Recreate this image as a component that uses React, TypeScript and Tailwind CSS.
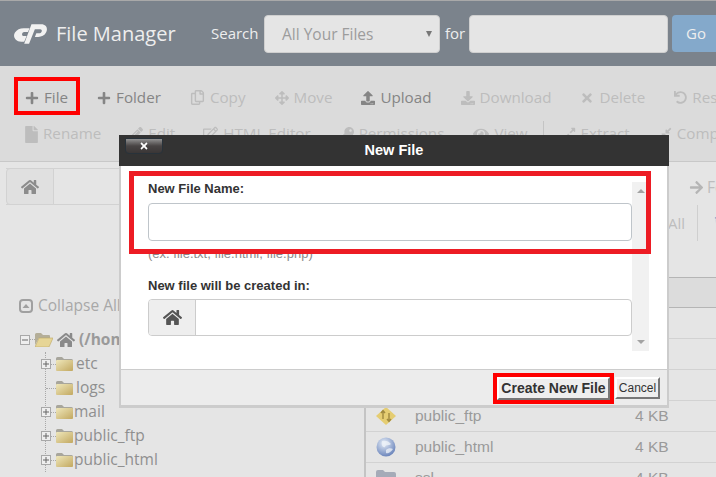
import React from 'react';
import {
  FaPlus, FaRegCopy, FaArrowsAlt, FaUpload, FaDownload, FaTimes, FaUndo, FaFile, FaPencilAlt, FaRegEdit,
  FaKey, FaEye, FaExpandAlt, FaCompressAlt, FaHome, FaArrowRight, FaTrash,
} from 'react-icons/fa';

const CpLogo = () => (
  <svg viewBox="0 0 34 22" className="w-[33px] h-[22px] shrink-0" fill="#f2f2f2">
    <path d="M10 5 H16 L14.4 9 H10.5 C8.2 9 7.4 12.8 9.6 13 H13 L10.5 19 H7.5 C1 19 -1.5 13 1 9.5 C3 6.5 6 5 10 5 Z" />
    <path d="M18 1 H28 C34 1 35 6 33 9.5 C31.5 12.5 28.5 14 25 14 H21.5 L23 10.2 H26.5 C29 10.2 29.6 6 27 6 H21.5 L15.5 21 H10.5 Z" />
  </svg>
);

const Tool = ({ icon, label, on }: { icon: React.ReactNode; label: string; on?: boolean }) => (
  <div className={`flex shrink-0 items-center gap-[5px] whitespace-nowrap ${on ? 'text-[#858585]' : 'text-[#bdbdbd]'}`}>
    {icon}
    <span>{label}</span>
  </div>
);

const TreeBox = ({ minus }: { minus?: boolean }) => (
  <svg viewBox="0 0 10 10" className="w-[10px] h-[10px] shrink-0">
    <rect x="0.5" y="0.5" width="9" height="9" fill="#eeeeee" stroke="#a8a8a8" />
    <path d={minus ? 'M2 5 H8' : 'M2 5 H8 M5 2 V8'} stroke="#666666" strokeWidth="1" fill="none" />
  </svg>
);

const TreeFolder = () => (
  <svg viewBox="0 0 17 14" className="w-[17px] h-[14px] shrink-0">
    <defs>
      <linearGradient id="fold" x1="0" y1="0" x2="1" y2="1">
        <stop offset="0" stopColor="#efe7bb" />
        <stop offset="1" stopColor="#c2a860" />
      </linearGradient>
    </defs>
    <path d="M0 1.5 Q0 0 1.5 0 H6 L8 2 H15.5 Q17 2 17 3.5 V5 H0 Z" fill="#a8a69c" />
    <rect x="0" y="3" width="17" height="11" rx="1" fill="url(#fold)" />
  </svg>
);

const OpenFolder = () => (
  <svg viewBox="0 0 18 14" className="w-[18px] h-[14px] shrink-0">
    <path d="M0 1.5 Q0 0 1.5 0 H6 L8 2 H14 Q15 2 15 3 V5 H4 L0 12 Z" fill="#b4ae98" />
    <path d="M4 5 H18 L14 14 H0 Z" fill="#e6d596" stroke="#bda766" strokeWidth="0.6" />
  </svg>
);

const TreeRow = ({ name, gap, box = true }: { name: string; gap: string; box?: boolean }) => (
  <div className="flex items-center h-[24px] -ml-[5px]">
    {box ? <TreeBox /> : <span className="w-[10px] ml-[5px] -mr-[5px] border-t border-dotted border-[#a8a8a8]" />}
    <span className="w-[5px] border-t border-dotted border-[#a8a8a8]" />
    <TreeFolder />
    <span className={`${gap} text-[#8f8f8f]`}>{name}</span>
  </div>
);

const FileRow = ({ icon, name, size }: { icon?: React.ReactNode; name?: string; size?: string }) => (
  <div className="flex items-center h-[31px] border-b border-[#d2d2d2] text-[15.5px] text-[#9a9a9a] font-['Liberation_Sans',sans-serif]">
    <div className="w-[49px] shrink-0 flex justify-center pr-[9px]">{icon}</div>
    <div className="w-[220px] shrink-0">{name}</div>
    <div className="whitespace-nowrap">{size}</div>
  </div>
);

const FtpIcon = () => (
  <svg viewBox="0 0 20 18" className="w-[20px] h-[18px]">
    <path d="M10 0 L20 9 L10 18 L0 9 Z" fill="#e5cd72" />
    <path d="M7 4 V12 M5 6 L7 3.5 L9 6 M13 14 V6 M11 12 L13 14.5 L15 12" stroke="#a08a40" strokeWidth="1.4" fill="none" />
  </svg>
);

const GlobeIcon = () => (
  <svg viewBox="0 0 20 20" className="w-[20px] h-[20px]">
    <defs>
      <radialGradient id="globe" cx="0.4" cy="0.3" r="0.8">
        <stop offset="0" stopColor="#e4ecf6" />
        <stop offset="1" stopColor="#5c78b4" />
      </radialGradient>
    </defs>
    <circle cx="10" cy="10" r="9.5" fill="url(#globe)" />
    <path d="M6 4 C9 3 13 4 15 7 C13 9 10 7 9 10 C7 11 5 8 6 4 Z M10 13 C12 11 15 11 17 12 C15 15 12 17 10 16 Z" fill="#f0f4fa" opacity="0.75" />
  </svg>
);

const SmallFolder = () => (
  <svg viewBox="0 0 20 16" className="w-[20px] h-[16px]">
    <path d="M0 2 Q0 0 2 0 H7 L9 2 H18 Q20 2 20 4 V16 H0 Z" fill="#a5abb8" />
  </svg>
);

const App: React.FC = () => {
  return (
    <div className="relative w-[716px] h-[477px] overflow-hidden bg-[#e5e5e5] font-['Open_Sans',sans-serif]">
      {/* header */}
      <div className="h-[66px] bg-[#7b838c] border-t border-[#a9a9a9] flex items-center pl-[14px] text-[#eeeeee]">
        <CpLogo />
        <span className="ml-[9px] shrink-0 text-[20px] w-[155px]">File Manager</span>
        <span className="shrink-0 text-[15px] w-[53px]">Search</span>
        <div className="shrink-0 w-[176px] h-[38px] rounded-[4px] bg-[#e5e5e5] border border-[#cfcfcf] flex items-center justify-between pl-[17px] pr-[7px] text-[15.5px] text-[#9c9c9c]">
          <span className="pt-[2px]">All Your Files</span>
          <span className="w-0 h-0 border-x-[3px] border-x-transparent border-t-[6px] border-t-[#777]" />
        </div>
        <span className="shrink-0 ml-[5px] text-[15px] w-[24px]">for</span>
        <div className="shrink-0 w-[199px] h-[38px] rounded-[4px] bg-[#e5e5e5] border border-[#cfcfcf]" />
        <div className="shrink-0 ml-[4px] w-[60px] h-[37px] rounded-[4px] bg-[#84a9cb] flex items-center pl-[14px] text-[15px]">Go</div>
      </div>

      {/* toolbar */}
      <div className="h-[96px] bg-[#dbdbdb] border-b border-[#c8c8c8] pt-[14px] text-[15.2px] leading-none">
        <div className="flex items-center h-[36px] pl-[25px] gap-[29px]">
          <Tool on label="File" icon={<FaPlus size={14} />} />
          <Tool on label="Folder" icon={<FaPlus size={14} />} />
          <Tool label="Copy" icon={<FaRegCopy size={15} />} />
          <Tool label="Move" icon={<FaArrowsAlt size={14} />} />
          <Tool on label="Upload" icon={<FaUpload size={14} />} />
          <Tool label="Download" icon={<FaDownload size={14} />} />
          <Tool label="Delete" icon={<FaTimes size={14} />} />
          <Tool label="Restore" icon={<FaUndo size={13} />} />
        </div>
        <div className="flex items-center h-[36px] pl-[25px] gap-[29px]">
          <Tool label="Rename" icon={<FaFile size={17} className="-mx-[2px]" />} />
          <Tool label="Edit" icon={<FaPencilAlt size={13} />} />
          <Tool label="HTML Editor" icon={<FaRegEdit size={15} className="-ml-[1px]" />} />
          <Tool label="Permissions" icon={<FaKey size={14} />} />
          <Tool label="View" icon={<FaEye size={16} />} />
          <div className="w-px h-[26px] -ml-[14px] -mr-[10px] shrink-0 bg-[#c4c4c4]" />
          <Tool label="Extract" icon={<FaExpandAlt size={13} />} />
          <Tool label="Compress" icon={<FaCompressAlt size={13} />} />
        </div>
      </div>

      {/* body */}
      <div className="flex h-[315px]">
        <div className="w-[366px] shrink-0 border-r-2 border-[#c4c4c4]">
          <div className="h-[37px] mt-[6px] ml-[6px] flex border-y border-[#d2d2d2]">
            <div className="w-[48px] -my-px shrink-0 flex items-center justify-center bg-[#e0e0e0] border border-[#d2d2d2] rounded-l-[4px] text-[#8c8c8c]">
              <FaHome size={18} />
            </div>
          </div>
          <div className="flex items-center h-[20px] mt-[91px] pl-[19px] text-[15.5px] text-[#a8a8a8]">
            <svg viewBox="0 0 14 14" className="w-[14px] h-[14px] shrink-0">
              <rect x="1" y="1" width="12" height="12" rx="3" fill="none" stroke="#a0a0a0" strokeWidth="2" />
              <path d="M3.5 9 L7 5 L10.5 9 Z" fill="#a0a0a0" />
            </svg>
            <span className="ml-[5px] whitespace-nowrap">Collapse All</span>
          </div>
          <div className="mt-[11px] text-[15.5px]">
            <div className="flex items-center h-[25px] pl-[20px]">
              <TreeBox minus />
              <span className="w-[5px] border-t border-dotted border-[#a8a8a8]" />
              <OpenFolder />
              <FaHome size={18} className="ml-[4px] shrink-0 text-[#8a8a8a]" />
              <span className="ml-[4px] font-bold text-[#9a9a9a] whitespace-nowrap">(/home</span>
            </div>
            <div className="ml-[45px] border-l border-dotted border-[#a8a8a8]">
              <TreeRow name="etc" gap="ml-[3px]" />
              <TreeRow name="logs" gap="ml-[3px]" box={false} />
              <TreeRow name="mail" gap="ml-[1px]" />
              <TreeRow name="public_ftp" gap="ml-[1px]" />
              <TreeRow name="public_html" gap="ml-[1px]" />
            </div>
          </div>
        </div>
        <div className="flex-1 min-w-0">
          <div className="h-[43px] pt-[16px] pl-[323px] flex items-start gap-[3px] text-[15.5px] leading-[18px] text-[#bdbdbd] whitespace-nowrap">
            <FaArrowRight size={15} className="shrink-0 mt-[2px] text-[#b5b5b5]" />
            <span>Folder</span>
          </div>
          <div className="h-[36px] flex items-center pl-[302px] text-[15px] text-[#bdbdbd]">
            <span className="w-[29px] shrink-0">All</span>
            <div className="w-px h-[36px] shrink-0 bg-[#cfcfcf]" />
            <FaTrash size={14} className="ml-[16px] shrink-0 text-[#a8a8c8]" />
          </div>
          <div className="h-[36px]" />
          <div className="h-[31px] bg-[#dcdcdc] border-y border-[#b5b5b5]" />
          <FileRow />
          <FileRow />
          <FileRow />
          <FileRow name="public_ftp" size="4 KB" icon={<FtpIcon />} />
          <FileRow name="public_html" size="4 KB" icon={<GlobeIcon />} />
          <FileRow name="ssl" size="4 KB" icon={<SmallFolder />} />
        </div>
      </div>

      {/* red marker on + File */}
      <div className="absolute left-[14px] top-[77px] w-[66px] h-[38px] border-[4px] border-[#ff0000]" />

      {/* dialog */}
      <div className="absolute left-[119px] top-[135px] w-[550px] h-[273px] bg-white border-x-2 border-b-[3px] border-[#cccccc] text-[13px] font-['Liberation_Sans',sans-serif]">
        <div className="relative -mx-[2px] h-[31px] bg-[#333333] flex items-center justify-center">
          <span className="text-white font-bold text-[14.5px]">New File</span>
          <div className="absolute left-[6px] top-[3px] w-[38px] h-[16px] rounded-b-[4px] rounded-t-[1px] bg-gradient-to-b from-[#929292] via-[#484444] to-[#3a3636] border border-[#28323a] flex items-center justify-center">
            <FaTimes size={10} className="text-white" />
          </div>
        </div>
        <div className="relative h-[203px] pl-[27px] pt-[13px] text-[#333333]">
          <div className="font-bold leading-[19px] h-[19px]">New File Name:</div>
          <div className="mt-[5px] w-[484px] h-[38px] rounded-[4px] border border-[#bfc5ca] bg-white" />
          <div className="mt-[6px] leading-[14px] text-[#8a8a8a]">(ex. file.txt, file.html, file.php)</div>
          <div className="mt-[15px] font-bold leading-[19px] h-[19px]">New file will be created in:</div>
          <div className="mt-[4px] w-[484px] h-[37px] rounded-[4px] border border-[#cccccc] flex overflow-hidden">
            <div className="w-[47px] shrink-0 bg-[#eeeeee] border-r border-[#cccccc] flex items-center justify-center text-[#555555]">
              <FaHome size={19} />
            </div>
          </div>
          {/* scrollbar */}
          <div className="absolute right-[18px] top-[16px] bottom-[18px] w-[17px] bg-[#f1f1f1] flex flex-col items-center justify-between py-[7px]">
            <span className="w-0 h-0 border-x-[4px] border-x-transparent border-b-[4px] border-b-[#a3a3a3]" />
            <span className="w-0 h-0 border-x-[4px] border-x-transparent border-t-[4px] border-t-[#a3a3a3]" />
          </div>
          <div className="absolute left-[8px] top-[5px] w-[522px] h-[83px] border-[5px] border-[#ed1c24] pointer-events-none" />
        </div>
        <div className="h-[36px] bg-[#ececec] border-t border-[#cccccc] flex items-center justify-end pr-[7px] pt-[1px] gap-[5px]">
          <button className="relative h-[23px] w-[113px] bg-[#eeeeee] border-2 border-t-white border-l-white border-r-[#777777] border-b-[#777777] font-bold text-[14px] leading-none text-[#333333] whitespace-nowrap">
            Create New File
            <span className="absolute -left-[6px] -right-[6px] -top-[6px] -bottom-[6px] border-[4px] border-[#ff0000]" />
          </button>
          <button className="h-[22px] w-[45px] bg-[#eeeeee] border-2 border-t-white border-l-white border-r-[#777777] border-b-[#777777] text-[12px] leading-none text-[#333333]">
            Cancel
          </button>
        </div>
      </div>
    </div>
  );
};

export default App;
